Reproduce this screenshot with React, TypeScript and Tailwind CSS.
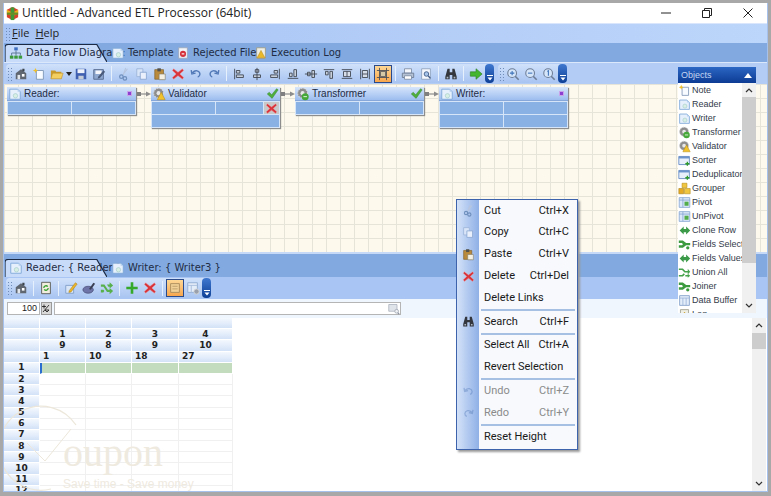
import React from 'react';

type IconName =
  | 'logo' | 'props' | 'new' | 'open' | 'save' | 'saveas' | 'cut' | 'copy' | 'paste' | 'del' | 'undo' | 'redo'
  | 'alignL' | 'alignC' | 'alignR' | 'alignB' | 'alignM' | 'alignT' | 'sizeW' | 'sizeH' | 'fit'
  | 'print' | 'preview' | 'find' | 'go' | 'zoomIn' | 'zoomOut' | 'zoom1' | 'flow' | 'doc' | 'rejected' | 'log'
  | 'gearOk' | 'gearWarn' | 'check' | 'sorter' | 'grouper' | 'pivot' | 'clone' | 'fields' | 'union' | 'buffer'
  | 'refresh' | 'pencil' | 'brush' | 'shuffle' | 'plus' | 'grid' | 'gridGear' | 'search';

const Gear = ({ c = '#8d8d8d' }: { c?: string }) => (
  <>
    <circle cx="7.5" cy="7" r="5.6" fill={c} />
    <circle cx="7.5" cy="7" r="5.6" fill="none" stroke="#d8d8d8" strokeWidth="1.2" strokeDasharray="1.5 1.5" />
    <circle cx="7.5" cy="7" r="2.3" fill="#e8e8e8" />
  </>
);

function Icon({ name, size = 16 }: { name: IconName; size?: number }) {
  const shapes: Record<IconName, React.ReactNode> = {
    logo: (
      <>
        <path d="M8 1l6 3v8l-6 3-6-3V4z" fill="#d9402a" />
        <path d="M2 4l6 3 6-3v4l-6 3-6-3z" fill="#e8b21c" />
        <path d="M6 1.5h4V15H6z" fill="#3f9a35" />
        <path d="M2 7l12 0v2.4H2z" fill="#6a8a24" />
      </>
    ),
    props: (
      <>
        <path d="M2 7l6-4.5L14 7v7H2z" fill="#5f6670" />
        <path d="M4 9h3v5H4z" fill="#e3e6ea" />
        <path d="M9 8h3v3H9z" fill="#fff" />
        <path d="M9.5 2h2.5v3h-2.5z" fill="#3d434a" />
      </>
    ),
    new: (
      <>
        <path d="M5 4h8v10H5z" fill="#f8fbff" stroke="#7c94b4" />
        <path d="M4 1l.9 2.1L7 4l-2.100.9L4 7l-.9-2.100L1 4l2.100-.9z" fill="#eebf2a" />
      </>
    ),
    open: (
      <>
        <path d="M1 4h5l1 1.500h6V13H1z" fill="#c99a2c" />
        <path d="M3 7h12l-2 6.500H1z" fill="#f3cf62" stroke="#b98a22" strokeWidth=".6" />
      </>
    ),
    save: (
      <>
        <path d="M2 2h11l1 1v11H2z" fill="#3f5fb0" />
        <path d="M4 2.500h8V7H4z" fill="#eef3fb" />
        <path d="M5 10h6v4H5z" fill="#c4ccd8" />
      </>
    ),
    saveas: (
      <>
        <path d="M2 3h11v11H2z" fill="#8fa8cf" stroke="#53678a" />
        <path d="M4 4h7v4H4z" fill="#f4f6fb" />
        <path d="M7 11l6-7 2 1.500-6 7-2.500.5z" fill="#495a7a" />
      </>
    ),
    cut: (
      <>
        <path d="M10 1L7 9M12 2L6 10" stroke="#b7c6de" strokeWidth="1.300" fill="none" />
        <circle cx="5" cy="11" r="2" fill="none" stroke="#6f8fbd" strokeWidth="1.400" />
        <circle cx="9" cy="13" r="2" fill="none" stroke="#6f8fbd" strokeWidth="1.400" />
      </>
    ),
    copy: (
      <>
        <path d="M2 2h7v9H2z" fill="#d8e5f8" stroke="#9db5d9" />
        <path d="M6 6h7v8H6z" fill="#eaf1fc" stroke="#8aa6d0" />
      </>
    ),
    paste: (
      <>
        <path d="M2 3h10v11H2z" fill="#b98a3b" stroke="#7c5a22" strokeWidth=".7" />
        <path d="M5 1.500h4V5H5z" fill="#53524c" />
        <path d="M7 8h7v6.500H7z" fill="#f4f1e4" stroke="#807a68" strokeWidth=".7" />
      </>
    ),
    del: <path d="M3 2l5 4 5-4 1.500 2-4.300 4 4.300 4-1.500 2-5-4-5 4-1.500-2 4.300-4-4.300-4z" fill="#d8343c" stroke="#f2a4a4" strokeWidth=".5" />,
    undo: <path d="M4 6.500c3-3.500 8-2.500 8.500 1.500 0 2-1 3-2.500 3.500M2.500 3.500l.8 4.500 4.200-1" fill="none" stroke="#5279b8" strokeWidth="1.600" />,
    redo: <path d="M12 6.500C9 3 4 4 3.500 8c0 2 1 3 2.500 3.500M13.500 3.500l-.8 4.500-4.200-1" fill="none" stroke="#5279b8" strokeWidth="1.600" />,
    alignL: <path d="M3 2v12M5 4h4v3H5zM5 9h8v3H5z" fill="#c8d0dc" stroke="#3f4650" />,
    alignC: <path d="M8 1v14M6 3h4v3H6zM4 9h8v3H4z" fill="#c8d0dc" stroke="#3f4650" />,
    alignR: <path d="M13 2v12M7 4h4v3H7zM3 9h8v3H3z" fill="#c8d0dc" stroke="#3f4650" />,
    alignB: <path d="M2 13h12M4 7h3v4H4zM9 3h3v8H9z" fill="#c8d0dc" stroke="#3f4650" />,
    alignM: <path d="M1 8h14M4 6h3v4H4zM9 4h3v8H9z" fill="#c8d0dc" stroke="#3f4650" />,
    alignT: <path d="M2 3h12M4 5h3v4H4zM9 5h3v8H9z" fill="#c8d0dc" stroke="#3f4650" />,
    sizeW: <path d="M2 3h12M2 13h12M4 5h8v6H4zM8 5v6" fill="#d8dee8" stroke="#3f4650" />,
    sizeH: <path d="M3 2v12M13 2v12M5 4h6v8H5zM5 8h6" fill="#d8dee8" stroke="#3f4650" />,
    fit: <path d="M4 1v14M12 1v14M1 4h14M1 12h14M5 5h6v6H5z" fill="#d6c9a6" stroke="#4d5058" />,
    print: (
      <>
        <path d="M4 2h8v5H4z" fill="#f4f7fc" stroke="#7f8fa6" />
        <path d="M1.500 7h13v5h-13z" fill="#b5c2d6" stroke="#6d7b92" />
        <path d="M4 10h8v4H4z" fill="#fff" stroke="#7f8fa6" />
      </>
    ),
    preview: (
      <>
        <path d="M3 2h10v12H3z" fill="#f5f8fd" stroke="#8ea1bd" />
        <circle cx="8.500" cy="8" r="2.600" fill="#a6c3ea" stroke="#3f5a86" />
        <path d="M10.500 10l2.500 3" stroke="#3f5a86" strokeWidth="1.500" />
      </>
    ),
    find: (
      <>
        <path d="M4 2h2.500v4H9.500V2H12l2.500 9v3H9.500V9h-3v5H1.500v-3z" fill="#33373d" />
        <path d="M3 11h2v2H3zM11 11h2v2h-2z" fill="#aeb6c2" />
      </>
    ),
    go: <path d="M1.500 5.500H8V2l7 6-7 6v-3.500H1.500z" fill="#44b52f" stroke="#2c7f22" strokeWidth=".7" />,
    zoomIn: (
      <>
        <circle cx="7" cy="7" r="5" fill="#d5e5fa" stroke="#6c7d95" strokeWidth="1.200" />
        <path d="M10.500 10.500l4 4" stroke="#6c7d95" strokeWidth="1.800" />
        <path d="M4.500 7h5M7 4.500v5" stroke="#3c72b8" strokeWidth="1.200" />
      </>
    ),
    zoomOut: (
      <>
        <circle cx="7" cy="7" r="5" fill="#d5e5fa" stroke="#6c7d95" strokeWidth="1.200" />
        <path d="M10.500 10.500l4 4" stroke="#6c7d95" strokeWidth="1.800" />
        <path d="M4.500 7h5" stroke="#3c72b8" strokeWidth="1.200" />
      </>
    ),
    zoom1: (
      <>
        <circle cx="7" cy="7" r="5" fill="#d5e5fa" stroke="#6c7d95" strokeWidth="1.200" />
        <path d="M10.500 10.500l4 4" stroke="#6c7d95" strokeWidth="1.800" />
        <path d="M6 5l1.300-.8V10" fill="none" stroke="#3c72b8" strokeWidth="1.200" />
      </>
    ),
    flow: (
      <>
        <path d="M8 5v3M3 11V8h10v3M8 8v3" fill="none" stroke="#55708f" />
        <path d="M6 1.500h4v3.500H6z" fill="#3f6fc0" />
        <path d="M1 11h4v3.500H1z" fill="#3b9a3a" />
        <path d="M6 11h4v3.500H6z" fill="#3b9a3a" />
        <path d="M11 11h4v3.500h-4z" fill="#3b9a3a" />
      </>
    ),
    doc: (
      <>
        <path d="M2 2.500h9l3 3V14H2z" fill="#e5f0fc" stroke="#7da6d8" />
        <path d="M11 2.500l3 3h-3z" fill="#b6d0ee" />
        <circle cx="8.500" cy="10" r="2.500" fill="#d8efe6" stroke="#97c3c0" strokeWidth=".6" />
      </>
    ),
    rejected: (
      <>
        <path d="M3 2h10v12H3z" fill="#f2f4f8" stroke="#9ba8bc" />
        <circle cx="8" cy="9" r="3.500" fill="#d5313a" />
        <path d="M6.500 9h3" stroke="#fff" strokeWidth="1.300" />
      </>
    ),
    log: (
      <>
        <path d="M3 2h10v12H3z" fill="#f0efe5" stroke="#9a9a8c" />
        <path d="M8 5l4.500 8.500h-9z" fill="#eab92a" stroke="#b98a17" strokeWidth=".6" />
      </>
    ),
    gearOk: (
      <>
        <Gear />
        <circle cx="10.500" cy="11" r="4" fill="#45a838" />
        <path d="M8.500 11h4" stroke="#d6f0cf" strokeWidth="1.200" />
      </>
    ),
    gearWarn: (
      <>
        <Gear />
        <path d="M10.500 6l4.500 8.500H6z" fill="#f0c22e" stroke="#b88b14" strokeWidth=".6" />
      </>
    ),
    check: <path d="M1.500 8.500l2.500-2 3 3L13 2l2 1.500L7.500 14z" fill="#4fae3c" stroke="#2f7f25" strokeWidth=".5" />,
    sorter: (
      <>
        <path d="M1 3h13v10H1z" fill="#e8f0fc" stroke="#5c83bd" />
        <path d="M1 3h13v2.500H1z" fill="#6c94cc" />
        <path d="M11.500 9.500v5M9 12h5" stroke="#2f9a2c" strokeWidth="1.600" />
      </>
    ),
    grouper: (
      <>
        <path d="M5 1.500h6V7H5z" fill="#f0c640" stroke="#b48c17" strokeWidth=".7" />
        <path d="M1 8h6v6.500H1z" fill="#e6ab24" stroke="#a87f14" strokeWidth=".7" />
        <path d="M8 8h7v6.500H8z" fill="#f0c640" stroke="#b48c17" strokeWidth=".7" />
      </>
    ),
    pivot: (
      <>
        <path d="M1.500 2h13v12h-13z" fill="#dbe8f9" stroke="#86a6d2" />
        <path d="M1.500 5h13M6 2v12" stroke="#86a6d2" />
        <path d="M8 7h5v5H8z" fill="#52ad4a" />
      </>
    ),
    clone: <path d="M2 8l5-5v3h3V3l5 5-5 5v-3H7v3z" fill="#3b9a47" />,
    fields: (
      <>
        <path d="M1 3h5l4 3h5v3h-5l-4 3H1V9h4l1-1-1-2H1z" fill="#3c9a3f" />
        <circle cx="12" cy="12" r="2" fill="#3c9a3f" />
      </>
    ),
    union: (
      <>
        <path d="M1 3h5l3 3h3V3.500L15 7l-3 3.500V8H8L5 5H1zM1 11h4l2-2 1.500 1.500L6 13H1z" fill="#47a24c" />
        <path d="M9 11h3V9.500l3 2.500-3 2.500V13H9z" fill="#47a24c" />
      </>
    ),
    buffer: (
      <>
        <path d="M2 2h12v12H2z" fill="#e3ecf9" stroke="#7f9dc8" />
        <path d="M2 5h12M6 5v9M10 5v9" stroke="#9ab4d8" />
      </>
    ),
    refresh: (
      <>
        <path d="M3 1.500h10v13H3z" fill="#f1eee0" stroke="#54564e" />
        <path d="M5.500 8a2.500 2.500 0 014.500-1.500M10.500 8A2.500 2.500 0 016 9.500" fill="none" stroke="#37a030" strokeWidth="1.500" />
      </>
    ),
    pencil: (
      <>
        <path d="M2 5h9v9H2z" fill="#d9e6f8" stroke="#7e9dc8" />
        <path d="M6 11l7-9 2 1.500-7 9-2.500.5z" fill="#ecb52c" stroke="#a77e16" strokeWidth=".6" />
      </>
    ),
    brush: (
      <>
        <ellipse cx="7" cy="10" rx="6" ry="4" fill="#6e74a8" stroke="#3a3f66" strokeWidth=".7" />
        <path d="M8 9l5-7 2 1-5 7z" fill="#3b3f52" />
      </>
    ),
    shuffle: <path d="M1 4h4l4 6h2V8l4 3.500L11 15v-2.500H8L4 6.500H1zM1 10h3l1 1.500L3.800 13H1zM8 4h3V1.500L15 5l-4 3.500V6.500H9.500z" fill="#58b04c" />,
    plus: <path d="M6.500 1.500h3v5h5v3h-5v5h-3v-5h-5v-3h5z" fill="#36a82a" />,
    grid: (
      <>
        <path d="M3 3h10v10H3z" fill="#f1d197" stroke="#a6885a" />
        <path d="M5 6h6M5 9h6" stroke="#b99a66" />
      </>
    ),
    gridGear: (
      <>
        <path d="M2 2h11v11H2z" fill="#e3ecf9" stroke="#8ea9cf" />
        <path d="M2 5h11M6 5v8" stroke="#a5bcdc" />
        <circle cx="12" cy="12" r="3" fill="#9aa1ac" stroke="#d6d9de" />
      </>
    ),
    search: (
      <>
        <path d="M1 2h11v9H1z" fill="#dfe3ea" stroke="#a7adb8" />
        <circle cx="11.500" cy="11" r="2.500" fill="#eef1f5" stroke="#9aa1ac" />
        <path d="M13 13l2 2" stroke="#8d94a0" strokeWidth="1.500" />
      </>
    ),
  };
  return (
    <svg width={size} height={size} viewBox="0 0 16 16" className="shrink-0">
      {shapes[name]}
    </svg>
  );
}

const Grip = () => (
  <div className="w-[5px] h-[14px] shrink-0 ml-px bg-[radial-gradient(circle,#6f8bb8_0.6px,transparent_0.8px)] bg-[size:3px_3px]" />
);

const Sep = () => <div className="w-px h-[15px] mx-[3px] shrink-0 bg-[#8fa9d0] border-r border-[#e6effc]" />;

const Chevron = () => (
  <div className="w-[9px] self-stretch rounded-sm bg-gradient-to-b from-[#3f78d0] to-[#0e3f96] flex items-end justify-center pb-[2px] shrink-0">
    <svg width="6" height="6" viewBox="0 0 6 6">
      <path d="M0 0h6v1H0zM.5 2.500h5L3 5.500z" fill="#fff" />
    </svg>
  </div>
);

const Tool = ({ name, active, w = 'w-[18px]' }: { name: IconName; active?: boolean; w?: string }) => (
  <div
    className={`${w} h-[18px] shrink-0 flex items-center justify-center ${
      active ? 'bg-gradient-to-b from-[#fcd794] to-[#f8a74d] border border-[#2a4a8a]' : ''
    }`}
  >
    <Icon name={name} size={14} />
  </div>
);

function Tab({ label, icon, active, width }: { label: string; icon: IconName; active?: boolean; width: string }) {
  return (
    <div className={`${width} relative h-[18px] flex items-center pl-[3px] gap-[3px] self-end shrink-0`}>
      {active && (
        <svg className="absolute inset-0 w-full h-full" viewBox="0 0 100 18" preserveAspectRatio="none">
          <path d="M0 18V3Q0 0.500 3 0.500H90L100 18Z" fill="#c8dbf8" />
          <path d="M0 18V3Q0 0.500 3 0.500H90L100 18" fill="none" stroke="#1c2a44" strokeWidth="1.200" vectorEffect="non-scaling-stroke" />
        </svg>
      )}
      <span className="relative flex items-center gap-[3px] text-[#1f2c44] text-[10px] leading-none whitespace-nowrap ml-px">
        <Icon name={icon} size={14} />
        {label}
      </span>
    </div>
  );
}

function DiagramNode({
  title,
  icon,
  left,
  rows,
  status,
  del,
}: {
  title: string;
  icon: IconName;
  left: string;
  rows: number;
  status: 'port' | 'ok';
  del?: boolean;
}) {
  return (
    <div className={`absolute top-[3px] ${left} w-[129px] bg-[#d7e5f9] shadow-[1px_1px_1px_#8d8d8d]`}>
      <div className="h-[14px] px-[1px] flex items-center gap-[2px] bg-gradient-to-b from-[#d6e5fb] to-[#9dbdef] border-b border-[#86a7da]">
        <Icon name={icon} size={14} />
        <span className="flex-1 text-[10px] leading-none text-[#1f2c44] font-['Liberation_Sans',sans-serif]">{title}</span>
        {status === 'port' ? (
          <div className="w-[5px] h-[5px] mr-[3px] bg-[#8c3fd0] border border-[#c9a3ea]" />
        ) : (
          <Icon name="check" size={13} />
        )}
      </div>
      <div className="p-px flex flex-col gap-px">
        {del ? (
          <>
            <div className="flex gap-px h-[12px]">
              <div className="w-[63px] bg-[#8ab1e4]" />
              <div className="w-[47px] bg-[#8ab1e4]" />
              <div className="flex-1 bg-[#c8c8c8] flex items-center justify-center">
                <Icon name="del" size={13} />
              </div>
            </div>
            <div className="h-[12px] bg-[#8ab1e4]" />
          </>
        ) : (
          Array.from({ length: rows }).map((_, i) => (
            <div key={i} className="flex gap-px h-[12px]">
              <div className="flex-1 bg-[#8ab1e4]" />
              <div className="flex-1 bg-[#8ab1e4]" />
            </div>
          ))
        )}
      </div>
    </div>
  );
}

const Link = ({ left }: { left: string }) => (
  <svg className={`absolute top-[7px] ${left}`} width="16" height="6" viewBox="0 0 16 6">
    <path d="M1 1h4v4H1z" fill="#7f7f7f" />
    <path d="M5 3h6" stroke="#8c8c8c" strokeWidth="1.200" />
    <path d="M10 .5L15 3l-5 2.500z" fill="#8c8c8c" />
  </svg>
);

const objects: [string, IconName][] = [
  ['Note', 'new'],
  ['Reader', 'doc'],
  ['Writer', 'doc'],
  ['Transformer', 'gearOk'],
  ['Validator', 'gearWarn'],
  ['Sorter', 'sorter'],
  ['Deduplicator', 'sorter'],
  ['Grouper', 'grouper'],
  ['Pivot', 'pivot'],
  ['UnPivot', 'pivot'],
  ['Clone Row', 'clone'],
  ['Fields Selector', 'fields'],
  ['Fields Values', 'clone'],
  ['Union All', 'union'],
  ['Joiner', 'fields'],
  ['Data Buffer', 'buffer'],
  ['Log', 'log'],
];

type MenuItem = { label: string; keys?: string; icon?: IconName; off?: boolean } | 'sep';

const menu: MenuItem[] = [
  { label: 'Cut', keys: 'Ctrl+X', icon: 'cut' },
  { label: 'Copy', keys: 'Ctrl+C', icon: 'copy' },
  { label: 'Paste', keys: 'Ctrl+V', icon: 'paste' },
  { label: 'Delete', keys: 'Ctrl+Del', icon: 'del' },
  { label: 'Delete Links' },
  'sep',
  { label: 'Search', keys: 'Ctrl+F', icon: 'find' },
  'sep',
  { label: 'Select All', keys: 'Ctrl+A' },
  { label: 'Revert Selection' },
  'sep',
  { label: 'Undo', keys: 'Ctrl+Z', icon: 'undo', off: true },
  { label: 'Redo', keys: 'Ctrl+Y', icon: 'redo', off: true },
  'sep',
  { label: 'Reset Height' },
];

function ContextMenu() {
  return (
    <div className="absolute left-[456px] top-[199px] w-[122px] h-[251px] bg-[#f7f9fd] border border-[#3d63ad] shadow-[2px_2px_2px_#9a9a9a] font-['Roboto',sans-serif] text-[11px]">
      <div className="absolute left-0 top-0 bottom-0 w-[22px] bg-gradient-to-r from-[#d4e2f8] to-[#8fb0e6]" />
      <div className="relative flex flex-col">
        {menu.map((item, i) =>
          item === 'sep' ? (
            <div key={i} className="h-[2px] ml-[24px] mr-[2px] bg-[#a6c0e4]" />
          ) : (
            <div key={i} className={`h-[21.8px] flex items-center ${item.off ? 'text-[#8b8b8b]' : 'text-[#1a1a1a]'}`}>
              <div className={`w-[22px] flex justify-center ${item.off ? 'opacity-40' : ''}`}>
                {item.icon && <Icon name={item.icon} size={13} />}
              </div>
              <span className="pl-[5px] flex-1">{item.label}</span>
              <span className="pr-[8px]">{item.keys}</span>
            </div>
          ),
        )}
      </div>
    </div>
  );
}

function ObjectsPanel() {
  return (
    <div className="absolute left-[678px] top-[67px] w-[78px] h-[246px] flex flex-col">
      <div className="h-[16px] px-[3px] flex items-center justify-between bg-gradient-to-b from-[#2b67c4] to-[#0d3b94] text-[#c4d6f2] text-[9px] leading-none font-['Liberation_Sans',sans-serif]">
        Objects
        <svg width="8" height="5" viewBox="0 0 8 5" className="mr-[1px]">
          <path d="M0 5L4 0l4 5z" fill="#fff" />
        </svg>
      </div>
      <div className="flex-1 flex bg-white min-h-0">
        <div className="flex-1 overflow-hidden">
          {objects.map(([label, icon]) => (
            <div key={label} className="h-[14px] flex items-center whitespace-nowrap text-[9px] leading-none text-[#333b4a] font-['Liberation_Sans',sans-serif]">
              <Icon name={icon} size={13} />
              <span className="ml-px">{label}</span>
            </div>
          ))}
        </div>
        <div className="w-[14px] bg-[#f0f0f0] flex flex-col">
          <div className="h-[14px] flex items-center justify-center">
            <svg width="8" height="5" viewBox="0 0 8 5"><path d="M1 4l3-3 3 3" fill="none" stroke="#333" strokeWidth="1.200" /></svg>
          </div>
          <div className="h-[166px] bg-[#cdcdcd]" />
          <div className="flex-1 flex items-end justify-center pb-[5px]">
            <svg width="8" height="5" viewBox="0 0 8 5"><path d="M1 1l3 3 3-3" fill="none" stroke="#333" strokeWidth="1.200" /></svg>
          </div>
        </div>
      </div>
    </div>
  );
}

const colCells = ['w-[46px]', 'w-[46px]', 'w-[47px]', 'w-[54px]'];
const headRows = [
  ['', '', '', ''],
  ['1', '2', '3', '4'],
  ['9', '8', '9', '10'],
];
const fieldRow = ['1', '10', '18', '27'];

function DataGrid() {
  const hd = 'h-[11.2px] bg-gradient-to-b from-[#f4f8fe] to-[#d3e2f7] border-r border-b border-white text-[9px] leading-[11px] font-bold text-[#222] flex items-center';
  return (
    <div className="w-[229px] font-['DejaVu_Sans',sans-serif]">
      {headRows.map((r, i) => (
        <div key={i} className="flex">
          <div className={`w-[36px] ${hd}`} />
          {r.map((v, j) => (
            <div key={j} className={`${colCells[j]} ${hd} justify-center`}>{v}</div>
          ))}
        </div>
      ))}
      <div className="flex">
        <div className={`w-[36px] ${hd}`} />
        {fieldRow.map((v, j) => (
          <div key={j} className={`${colCells[j]} ${hd} pl-[3px]`}>{v}</div>
        ))}
      </div>
      {Array.from({ length: 12 }).map((_, i) => (
        <div key={i} className="flex">
          <div className={`w-[36px] ${hd} justify-center`}>{i + 1}</div>
          {colCells.map((w, j) => (
            <div
              key={j}
              className={`${w} h-[11.2px] border-r border-b ${
                i === 0 ? 'bg-[#c3dcbd] border-white' : 'border-[#f0f0f0]'
              } ${i === 0 && j === 0 ? 'border-l-2 border-l-[#2a6fd0]' : ''}`}
            />
          ))}
        </div>
      ))}
    </div>
  );
}

function Watermark() {
  return (
    <div className="absolute left-[-3px] top-[87px] w-[215px] h-[86px] text-[#efeadf] pointer-events-none">
      <svg className="absolute left-0 top-0" width="80" height="86" viewBox="0 0 80 86">
        <path d="M75 20A42 42 0 1 0 50 84" fill="none" stroke="#ece7da" strokeWidth="1.200" />
        <path d="M26 38l18 18 26-32" fill="none" stroke="#ece7da" strokeWidth="1" />
      </svg>
      <span className="absolute left-[62px] top-[28px] text-[40px] leading-none font-['Liberation_Serif',serif]">oupon</span>
      <span className="absolute left-[62px] top-[73px] text-[12px] leading-none whitespace-nowrap font-['Liberation_Sans',sans-serif]">Save time - Save money</span>
    </div>
  );
}

export default function App() {
  return (
    <div className="relative w-[771px] h-[496px] bg-[#a8a8a8] pt-[3px] pl-[3px] pr-[3px] pb-[4px] overflow-hidden font-['Liberation_Sans',sans-serif]">
      <div className="h-full flex flex-col border-l border-r border-b border-[#a6c2ec]">
        {/* title bar */}
        <div className="h-[20px] shrink-0 bg-white flex items-center pl-px">
          <Icon name="logo" size={15} />
          <span className="ml-[2px] text-[12px] text-[#222] font-['Open_Sans',sans-serif]">Untitled - Advanced ETL Processor (64bit)</span>
          <div className="ml-auto flex items-center">
            <svg width="10" height="2" viewBox="0 0 10 2" className="mr-[31px]"><path d="M0 1h10" stroke="#222" /></svg>
            <svg width="10" height="10" viewBox="0 0 10 10" className="mr-[31px]"><path d="M.5 2.500h7v7h-7zM2.500 2.500v-2h7v7h-2" fill="none" stroke="#222" /></svg>
            <svg width="10" height="10" viewBox="0 0 10 10" className="mr-[14px]"><path d="M.5.5l9 9M9.500.5l-9 9" stroke="#222" /></svg>
          </div>
        </div>

        {/* menu bar */}
        <div className="h-[20px] shrink-0 flex items-center bg-gradient-to-r from-[#a8c4f4] to-[#bcd5fa] border-t border-[#d9e6fb] text-[#222] text-[11px] font-['Open_Sans',sans-serif]">
          <Grip />
          <span className="ml-[2px]"><u>F</u>ile</span>
          <span className="ml-[6px]"><u>H</u>elp</span>
        </div>

        {/* document tabs */}
        <div className="h-[20px] shrink-0 flex items-end bg-[#82aae0] border-b border-[#dbe7fb] pl-px font-['DejaVu_Sans',sans-serif]">
          <Tab label="Data Flow Diagram:" icon="flow" active width="w-[102px]" />
          <Tab label="Template" icon="doc" width="w-[65px]" />
          <Tab label="Rejected File" icon="rejected" width="w-[78px]" />
          <Tab label="Execution Log" icon="log" width="w-[90px]" />
        </div>

        {/* main toolbar */}
        <div className="h-[21px] shrink-0 flex items-center gap-[4px] bg-[#b3ccf5] pl-[2px]">
          <div className="h-[19px] flex items-center rounded-sm bg-gradient-to-b from-[#d0e1fa] to-[#a8c4f1]">
            <Grip />
            <Tool name="props" />
            <Tool name="new" />
            <Tool name="open" />
            <svg width="6" height="4" viewBox="0 0 6 4" className="shrink-0"><path d="M0 0h6L3 4z" fill="#222" /></svg>
            <Tool name="save" />
            <Tool name="saveas" />
            <Sep />
            <Tool name="cut" />
            <Tool name="copy" />
            <Tool name="paste" />
            <Tool name="del" />
            <Tool name="undo" />
            <Tool name="redo" />
            <Sep />
            <Tool name="alignL" />
            <Tool name="alignC" />
            <Tool name="alignR" />
            <Tool name="alignB" />
            <Tool name="alignM" />
            <Tool name="alignT" />
            <Tool name="sizeW" />
            <Tool name="sizeH" />
            <Tool name="fit" active />
            <Sep />
            <Tool name="print" />
            <Tool name="preview" />
            <Sep />
            <Tool name="find" />
            <Sep />
            <Tool name="go" />
            <Chevron />
          </div>
          <div className="h-[19px] flex items-center rounded-sm bg-gradient-to-b from-[#d0e1fa] to-[#a8c4f1]">
            <Grip />
            <Tool name="zoomIn" />
            <Tool name="zoomOut" />
            <Tool name="zoom1" />
            <Chevron />
          </div>
        </div>

        {/* diagram canvas */}
        <div className="relative h-[168px] shrink-0 bg-[#fdf9ec] bg-[linear-gradient(#e6e3d8_1px,transparent_1px),linear-gradient(90deg,#e6e3d8_1px,transparent_1px)] bg-[size:14px_14px]">
          <DiagramNode title="Reader:" icon="doc" left="left-[3px]" rows={1} status="port" />
          <Link left="left-[132px]" />
          <DiagramNode title="Validator" icon="gearWarn" left="left-[147px]" rows={2} status="ok" del />
          <Link left="left-[276px]" />
          <DiagramNode title="Transformer" icon="gearOk" left="left-[291px]" rows={1} status="ok" />
          <Link left="left-[420px]" />
          <DiagramNode title="Writer:" icon="doc" left="left-[435px]" rows={2} status="port" />
        </div>

        {/* detail tabs */}
        <div className="h-[25px] shrink-0 flex items-end bg-[#82aae0] border-t-2 border-[#c6d9f6] pl-px font-['DejaVu_Sans',sans-serif]">
          <Tab label="Reader: { Reader }" icon="doc" active width="w-[102px]" />
          <Tab label="Writer: { Writer3 }" icon="doc" width="w-[100px]" />
        </div>

        {/* detail toolbar */}
        <div className="h-[22px] shrink-0 flex items-center bg-[#a9c5f4] pl-[2px]">
          <div className="h-[20px] flex items-center rounded-sm bg-gradient-to-b from-[#d0e1fa] to-[#a8c4f1]">
            <Grip />
            <Tool name="props" />
            <Sep />
            <Tool name="refresh" />
            <Sep />
            <Tool name="pencil" />
            <Tool name="brush" />
            <Tool name="shuffle" />
            <Sep />
            <Tool name="plus" />
            <Tool name="del" />
            <Sep />
            <Tool name="grid" active />
            <Tool name="gridGear" />
            <Chevron />
          </div>
        </div>

        {/* filter row */}
        <div className="h-[19px] shrink-0 flex items-center bg-[#f0f6fe] pl-[3px] gap-px">
          <div className="w-[33px] h-[13px] bg-white border border-[#b5b5b5] text-[9px] leading-[11px] text-right pr-[2px] text-[#222]">100</div>
          <div className="w-[11px] h-[13px] bg-[#d9d9d9] border border-[#9a9a9a] flex items-center justify-center">
            <svg width="9" height="9" viewBox="0 0 9 9"><path d="M2 .5v4M0 2.500h4M5 8l-2-2h4zM1 8l6-7" stroke="#111" strokeWidth=".8" fill="none" /></svg>
          </div>
          <div className="ml-px w-[347px] h-[13px] bg-white border border-[#b5b5b5] flex justify-end items-center">
            <Icon name="search" size={12} />
          </div>
        </div>

        {/* data grid */}
        <div className="relative flex-1 min-h-0 flex bg-white overflow-hidden">
          <DataGrid />
          <Watermark />
          <div className="ml-auto w-[14px] mr-px h-full bg-[#f0f0f0] flex flex-col">
            <div className="h-[15px] flex items-center justify-center">
              <svg width="8" height="5" viewBox="0 0 8 5"><path d="M1 4l3-3 3 3" fill="none" stroke="#333" strokeWidth="1.200" /></svg>
            </div>
            <div className="h-[16px] bg-[#cdcdcd]" />
            <div className="flex-1 flex items-end justify-center pb-[5px]">
              <svg width="8" height="5" viewBox="0 0 8 5"><path d="M1 1l3 3 3-3" fill="none" stroke="#333" strokeWidth="1.200" /></svg>
            </div>
          </div>
        </div>
      </div>

      <ObjectsPanel />
      <ContextMenu />
    </div>
  );
}
